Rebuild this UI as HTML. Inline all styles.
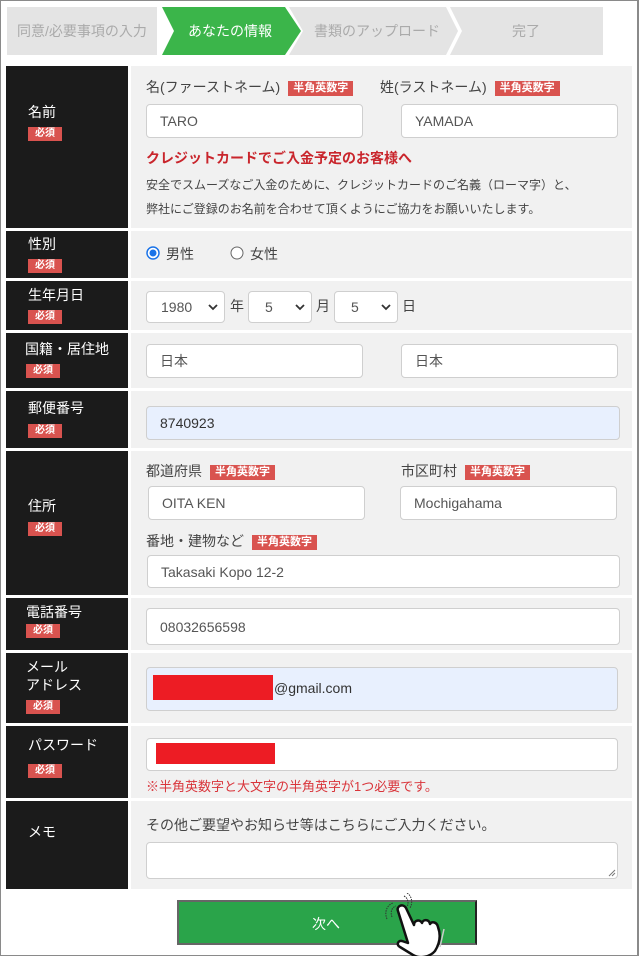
<!DOCTYPE html>
<html><head><meta charset="utf-8"><style>
*{box-sizing:border-box;margin:0;padding:0}
body{width:639px;height:956px;position:relative;background:#fff;font-family:"Liberation Sans","Noto Sans CJK JP",sans-serif;overflow:hidden}
.frame{position:absolute;left:0;top:0;width:639px;height:956px;border:1px solid #8a8a8a;border-right:2px solid #8a8a8a;border-bottom:1px solid #8a8a8a}
.a{position:absolute}
.lab{position:absolute;left:6px;width:122px;background:#1b1b1b}
.con{position:absolute;left:131px;width:501px;background:#f1f1f1}
.lt{position:absolute;left:22px;color:#fff;font-size:14px;line-height:18px}
.req{position:absolute;left:22px;width:34px;height:14px;background:#d9534f;color:#fff;font-size:10px;font-weight:bold;line-height:14px;text-align:center}
.inp{position:absolute;background:#fff;border:1px solid #cfcfcf;border-radius:4px;font-size:14px;color:#555;padding-left:13px;display:flex;align-items:center}
.blue{background:#e8f0fe}
.t{position:absolute;font-size:14px;color:#444;white-space:nowrap}
.bd{display:inline-block;background:#d9534f;color:#fff;font-size:11px;font-weight:bold;padding:0 5px;line-height:15px;vertical-align:1px;margin-left:8px}
.sel{position:absolute;background:#fff;border:1px solid #cfcfcf;border-radius:4px;font-size:14px;color:#555;height:32px;top:291px}
.sel span{position:absolute;top:7px}
.sel svg{position:absolute;right:6px;top:12px}
</style></head><body>
<div class="frame"></div>
<svg class="a" style="left:0;top:0" width="639" height="60">
<polygon points="7,7 157,7 157,55 7,55" fill="#e4e4e4"/>
<polygon points="162,7 285,7 301,31 285,55 162,55 174,31" fill="#3bb54a"/>
<polygon points="289,7 446,7 458,31 446,55 289,55 303,31" fill="#e4e4e4"/>
<polygon points="450,7 603,7 603,55 450,55 462,31" fill="#e4e4e4"/>
<text x="17" y="36" font-size="14" fill="#aaa" font-family="Liberation Sans,Noto Sans CJK JP,sans-serif">同意/必要事項の入力</text>
<text x="188" y="36" font-size="14" fill="#fff" font-family="Liberation Sans,Noto Sans CJK JP,sans-serif">あなたの情報</text>
<text x="314" y="36" font-size="14" fill="#aaa" font-family="Liberation Sans,Noto Sans CJK JP,sans-serif">書類のアップロード</text>
<text x="512" y="36" font-size="14" fill="#aaa" font-family="Liberation Sans,Noto Sans CJK JP,sans-serif">完了</text>
</svg>

<div class="lab" style="top:66px;height:162px"><div class="lt" style="top:37px">名前</div><div class="req" style="top:61px">必須</div></div>
<div class="con" style="top:66px;height:162px"></div>
<div class="t" style="left:146px;top:77px">名(ファーストネーム)<span class="bd">半角英数字</span></div>
<div class="t" style="left:380px;top:77px">姓(ラストネーム)<span class="bd">半角英数字</span></div>
<div class="inp" style="left:146px;top:104px;width:217px;height:34px">TARO</div>
<div class="inp" style="left:401px;top:104px;width:217px;height:34px">YAMADA</div>
<div class="t" style="left:146px;top:148px;font-size:14px;font-weight:bold;color:#c9252c">クレジットカードでご入金予定のお客様へ</div>
<div class="t" style="left:146px;top:176px;font-size:12px">安全でスムーズなご入金のために、クレジットカードのご名義（ローマ字）と、</div>
<div class="t" style="left:146px;top:200px;font-size:12px">弊社にご登録のお名前を合わせて頂くようにご協力をお願いいたします。</div>

<div class="lab" style="top:231px;height:47px"><div class="lt" style="top:4px">性別</div><div class="req" style="top:28px">必須</div></div>
<div class="con" style="top:231px;height:47px"></div>
<svg class="a" style="left:146px;top:246px" width="14" height="14"><circle cx="7" cy="7" r="6" fill="#fff" stroke="#1a73e8" stroke-width="1.5"/><circle cx="7" cy="7" r="3.5" fill="#1a73e8"/></svg>
<div class="t" style="left:166px;top:244px">男性</div>
<svg class="a" style="left:230px;top:246px" width="14" height="14"><circle cx="7" cy="7" r="6" fill="#fff" stroke="#666" stroke-width="1"/></svg>
<div class="t" style="left:250px;top:244px">女性</div>

<div class="lab" style="top:281px;height:49px"><div class="lt" style="top:5px">生年月日</div><div class="req" style="top:29px">必須</div></div>
<div class="con" style="top:281px;height:49px"></div>
<div class="sel" style="left:146px;width:79px"><span style="left:14px">1980</span><svg width="10" height="7"><path d="M1 1l4 4 4-4" stroke="#333" stroke-width="1.8" fill="none"/></svg></div>
<div class="t" style="left:230px;top:296px">年</div>
<div class="sel" style="left:248px;width:64px"><span style="left:16px">5</span><svg width="10" height="7"><path d="M1 1l4 4 4-4" stroke="#333" stroke-width="1.8" fill="none"/></svg></div>
<div class="t" style="left:316px;top:296px">月</div>
<div class="sel" style="left:334px;width:64px"><span style="left:16px">5</span><svg width="10" height="7"><path d="M1 1l4 4 4-4" stroke="#333" stroke-width="1.8" fill="none"/></svg></div>
<div class="t" style="left:402px;top:296px">日</div>

<div class="lab" style="top:333px;height:55px"><div class="lt" style="top:7px;left:19px">国籍・居住地</div><div class="req" style="top:31px;left:20px">必須</div></div>
<div class="con" style="top:333px;height:55px"></div>
<div class="inp" style="left:146px;top:344px;width:217px;height:34px">日本</div>
<div class="inp" style="left:401px;top:344px;width:217px;height:34px">日本</div>

<div class="lab" style="top:391px;height:57px"><div class="lt" style="top:8px">郵便番号</div><div class="req" style="top:33px">必須</div></div>
<div class="con" style="top:391px;height:57px"></div>
<div class="inp blue" style="left:146px;top:406px;width:474px;height:34px;color:#333">8740923</div>

<div class="lab" style="top:451px;height:144px"><div class="lt" style="top:46px">住所</div><div class="req" style="top:71px">必須</div></div>
<div class="con" style="top:451px;height:144px"></div>
<div class="t" style="left:146px;top:461px">都道府県<span class="bd">半角英数字</span></div>
<div class="t" style="left:401px;top:461px">市区町村<span class="bd">半角英数字</span></div>
<div class="inp" style="left:148px;top:486px;width:217px;height:34px">OITA KEN</div>
<div class="inp" style="left:400px;top:486px;width:217px;height:34px">Mochigahama</div>
<div class="t" style="left:146px;top:531px">番地・建物など<span class="bd">半角英数字</span></div>
<div class="inp" style="left:147px;top:555px;width:473px;height:33px">Takasaki Kopo 12-2</div>

<div class="lab" style="top:598px;height:52px"><div class="lt" style="top:5px;left:20px">電話番号</div><div class="req" style="top:26px;left:20px">必須</div></div>
<div class="con" style="top:598px;height:52px"></div>
<div class="inp" style="left:146px;top:608px;width:474px;height:37px">08032656598</div>

<div class="lab" style="top:653px;height:70px"><div class="lt" style="top:5px;left:20px">メール<br>アドレス</div><div class="req" style="top:47px;left:20px">必須</div></div>
<div class="con" style="top:653px;height:70px"></div>
<div class="inp blue" style="left:146px;top:667px;width:472px;height:44px;color:#333;padding-left:0"></div>
<div class="a" style="left:153px;top:675px;width:120px;height:25px;background:#ed1c24"></div>
<div class="t" style="left:274px;top:680px;color:#333">@gmail.com</div>

<div class="lab" style="top:726px;height:72px"><div class="lt" style="top:10px">パスワード</div><div class="req" style="top:38px">必須</div></div>
<div class="con" style="top:726px;height:72px"></div>
<div class="inp" style="left:146px;top:738px;width:472px;height:33px"></div>
<div class="a" style="left:156px;top:743px;width:119px;height:21px;background:#ed1c24"></div>
<div class="t" style="left:146px;top:776px;font-size:13px;color:#d9343a">※半角英数字と大文字の半角英字が1つ必要です。</div>

<div class="lab" style="top:801px;height:88px"><div class="lt" style="top:22px">メモ</div></div>
<div class="con" style="top:801px;height:88px"></div>
<div class="t" style="left:146px;top:815px">その他ご要望やお知らせ等はこちらにご入力ください。</div>
<div class="inp" style="left:146px;top:842px;width:472px;height:37px"></div>
<svg class="a" style="left:608px;top:869px" width="8" height="8"><path d="M7 1L1 7M7 4L4 7" stroke="#777" stroke-width="1"/></svg>

<div class="a" style="left:177px;top:900px;width:300px;height:45px;background:#2aa44a;border:2px solid #666;border-right:2px solid #222"></div>
<div class="t" style="left:312px;top:914px;color:#fff">次へ</div>
<svg class="a" style="left:378px;top:893px" width="80" height="63">
<path d="M14 24c-2-5 0-10 4-11M9 26c-3-7 0-14 6-16M26 3c4 2 5 7 3 11M29 0c5 3 6 10 3 15" stroke="#333" stroke-width="1" stroke-dasharray="1.5 1" fill="none"/>
<path d="M20 18c-2-5 5-8 8-3l8 17c0-5 6-6 8-2 1-4 7-4 8 1 2-3 7-2 8 3 3 8 2 16-3 24-5 6-15 8-22 4l-13-8c-4-2-2-7 2-6l6 2z" fill="#fff" stroke="#111" stroke-width="2.5" stroke-linejoin="round"/>
<path d="M66 36l-4 18" stroke="#ccc" stroke-width="1.5"/>
</svg>
</body></html>
